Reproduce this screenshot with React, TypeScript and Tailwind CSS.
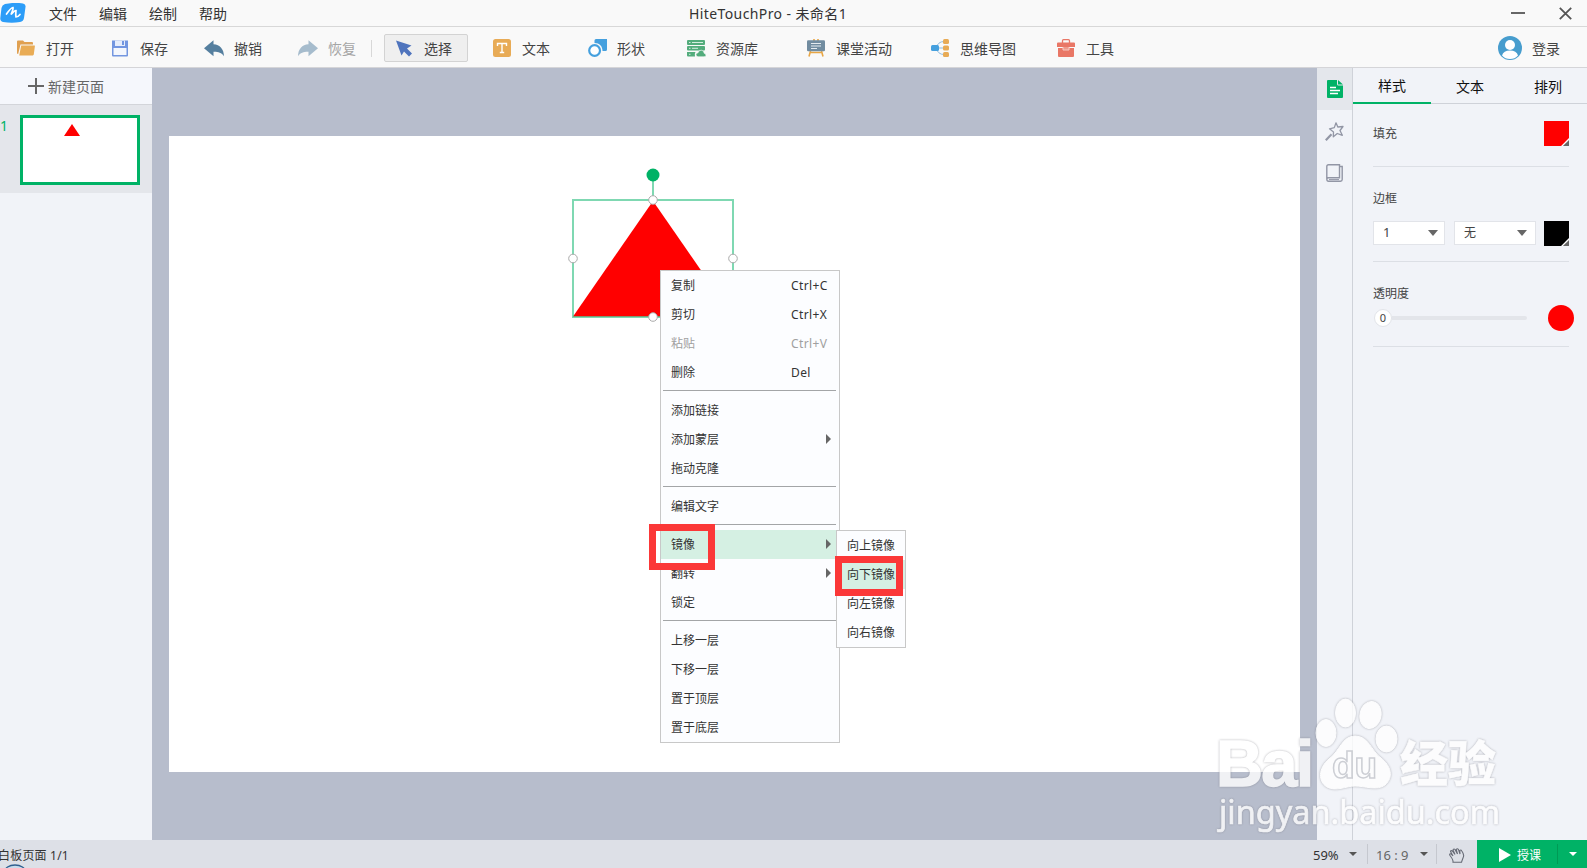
import type { ReactNode } from "react";

const OpenIcon = () => (
  <svg width="18" height="16" viewBox="0 0 18 16">
    <path d="M0 1.5Q0 .5 1 .5H6L7.5 2H15Q16 2 16 3V4.5H3.5L1.200 14H1Q0 14 0 13Z" fill="#e0a050" />
    <path d="M4.200 5.5H17.6Q18 5.5 17.9 6L16.800 14.6Q16.600 15.4 15.800 15.4H2.2Z" fill="#e9ac55" />
  </svg>
);

const SaveIcon = () => (
  <svg width="16" height="17" viewBox="0 0 16 17">
    <path d="M0 .5H16V15.5Q16 16.5 15 16.5H1Q0 16.5 0 15.5Z" fill="#7396e0" />
    <path d="M3 .5H13V6H3Z" fill="#e6edfb" />
    <path d="M10 1H12V5H10Z" fill="#7396e0" />
    <path d="M1.5 8H14.5V15H1.5Z" fill="#f4f7fd" />
  </svg>
);

const UndoIcon = () => (
  <svg width="20" height="17" viewBox="0 0 20 17">
    <path d="M0 8.2L9.5 .3V4.3C16 4.8 19.8 9 20 16.3C17.5 12.3 14 11.6 9.5 11.7V16.3Z" fill="#557f9f" />
  </svg>
);

const RedoIcon = () => (
  <svg width="20" height="17" viewBox="0 0 20 17">
    <path d="M20 8.2L10.5 .3V4.3C4 4.8 .2 9 0 16.3C2.5 12.3 6 11.6 10.5 11.7V16.3Z" fill="#a6bccd" />
  </svg>
);

const SelectIcon = () => (
  <svg width="16" height="17" viewBox="0 0 16 17">
    <path d="M0 .5L15.5 5.5L11 8.5L16 13.5L13 16.5L8 11.5L5.5 15.5Z" fill="#4f74bd" />
  </svg>
);

const TextIcon = () => (
  <svg width="18" height="18" viewBox="0 0 18 18">
    <rect width="18" height="18" rx="2.5" fill="#e8ab56" />
    <path d="M4.5 7V4.5H13.5V7M9 4.5V13.5M6.8 13.5H11.2" fill="none" stroke="#fff" strokeWidth="1.4" />
  </svg>
);

const ShapeIcon = () => (
  <svg width="19" height="18" viewBox="0 0 19 18">
    <path d="M6.5 1.5Q6.5 0 8 0H19V10.5Q19 12 17.5 12H14.5C14.5 7 11.5 4 6.5 4Z" fill="#45a0de" />
    <circle cx="6.6" cy="11.5" r="5.4" fill="#fff" stroke="#45a0de" strokeWidth="2.2" />
  </svg>
);

const LibraryIcon = () => (
  <svg width="19" height="17" viewBox="0 0 19 17">
    <g fill="#53ac7c">
      <rect width="18" height="5" rx="1" />
      <rect y="6" width="18" height="4.6" rx="1" />
      <path d="M0 12H8.5Q7.3 14 8 16.5H1Q0 16.5 0 15.5Z" />
      <path d="M11 16.8Q8.8 16.5 9 14.6Q9.2 13 11 12.8Q11.7 10 14.3 10.2Q17 10.4 17.1 13.2Q19 13.6 19 15.2Q18.8 16.8 17 16.8Z" stroke="#f9f9f9" strokeWidth=".6" />
    </g>
    <path d="M2 2.5H3.5M5 2.5H16M2 8.3H3.5M5 8.3H11M2 14.3H3.5" stroke="#d5eddf" strokeWidth="1" />
  </svg>
);

const ClassIcon = () => (
  <svg width="18" height="18" viewBox="0 0 18 18">
    <path d="M7 0V2M11 0V2M3.5 12L2 17.5M14.5 12L16 17.5M2.8 13.5H15.2" stroke="#e8a645" strokeWidth="1.6" />
    <rect y="1.2" width="18" height="11" rx="1.2" fill="#718ca0" />
    <path d="M4 4.5H14M4 7H14M4 9.5H10" stroke="#e5ebef" />
  </svg>
);

const MindIcon = () => (
  <svg width="18" height="18" viewBox="0 0 18 18">
    <path d="M5 9H13M5 9Q7 2.5 13 2.5M5 9Q7 15.5 13 15.5" fill="none" stroke="#91bde0" />
    <rect y="6" width="8" height="6" rx="1.5" fill="#45a0de" />
    <g fill="#e8ab56">
      <rect x="12" width="6" height="5" rx="1.5" />
      <rect x="12" y="6.5" width="6" height="5" rx="1.5" />
      <rect x="12" y="13" width="6" height="5" rx="1.5" />
    </g>
  </svg>
);

const ToolIcon = () => (
  <svg width="18" height="18" viewBox="0 0 18 18">
    <path d="M5.5 4V1.7Q5.5 .7 6.5 .7H11.5Q12.5 .7 12.5 1.7V4" fill="none" stroke="#e97766" strokeWidth="1.3" />
    <path d="M0 4.5Q0 3.5 1 3.5H17Q18 3.5 18 4.5V8H0ZM1 9H17V17Q17 18 16 18H2Q1 18 1 17Z" fill="#e97766" />
    <path d="M6 8V11H12V8" fill="#ee9a8c" stroke="#f8c9c1" />
  </svg>
);

const Tool = ({ icon, label, className }: { icon: ReactNode; label: string; className: string }) => (
  <div className={`flex h-7 shrink-0 items-center ${className}`}>
    {icon}
    <span className="whitespace-nowrap pt-0.5">{label}</span>
  </div>
);

const Row = ({ label, keys, arrow, disabled, active }: {
  label: string;
  keys?: string;
  arrow?: boolean;
  disabled?: boolean;
  active?: boolean;
}) => (
  <div className={`flex h-[29px] items-center pl-[10px] ${disabled ? "text-[#a0a0a0]" : ""} ${active ? "bg-[#d5f0e3]" : ""}`}>
    <span className="w-[120px] whitespace-nowrap pt-px">{label}</span>
    {keys && <span className="tracking-[0.4px]">{keys}</span>}
    {arrow && (
      <svg className="-mt-px ml-[35px]" width="5" height="10" viewBox="0 0 5 10">
        <path d="M0 0L5 5L0 10Z" fill="#666" />
      </svg>
    )}
  </div>
);

const Separator = () => (
  <div className="h-[9px] pl-[2px] pr-[3px] pt-[3px]">
    <div className="h-px bg-[#a3a5a7]" />
  </div>
);

const ContextMenu = () => (
  <div className="absolute left-[508px] top-[202px] w-[180px] border border-[#c8c8c8] bg-[#fcfdff] text-xs text-[#333]">
    <Row label="复制" keys="Ctrl+C" />
    <Row label="剪切" keys="Ctrl+X" />
    <Row label="粘贴" keys="Ctrl+V" disabled />
    <Row label="删除" keys="Del" />
    <Separator />
    <Row label="添加链接" />
    <Row label="添加蒙层" arrow />
    <Row label="拖动克隆" />
    <Separator />
    <Row label="编辑文字" />
    <Separator />
    <Row label="镜像" arrow active />
    <Row label="翻转" arrow />
    <Row label="锁定" />
    <Separator />
    <Row label="上移一层" />
    <Row label="下移一层" />
    <Row label="置于顶层" />
    <Row label="置于底层" />
  </div>
);

const SubMenu = () => (
  <div className="absolute left-[684px] top-[462px] w-[70px] overflow-hidden border border-[#c8c8c8] bg-[#fcfdff] text-xs text-[#333]">
    <Row label="向上镜像" />
    <Row label="向下镜像" active />
    <Row label="向左镜像" />
    <Row label="向右镜像" />
  </div>
);

const Selection = () => (
  <svg className="absolute left-[412px] top-[92px]" width="180" height="168" viewBox="0 0 180 168">
    <path d="M89 41L169 156.5H9Z" fill="#f00" />
    <path d="M9 40H169V157H9ZM89 40V15" fill="none" stroke="#00b266" strokeOpacity=".5" strokeWidth="2" />
    <circle cx="89" cy="15" r="6.5" fill="#00b266" />
    <g fill="#fff" stroke="#aaa">
      <circle cx="89" cy="40" r="4.3" />
      <circle cx="9" cy="98.5" r="4.3" />
      <circle cx="169" cy="98.5" r="4.3" />
      <circle cx="89" cy="157" r="4.3" />
    </g>
  </svg>
);

const Swatch = ({ className }: { className: string }) => (
  <div className={`size-[25px] ${className}`}>
    <svg width="25" height="25" viewBox="0 0 25 25">
      <path d="M25 18V25H18Z" fill="#666" />
      <path d="M25.5 17.5L17.5 25.5" stroke="#fff" strokeWidth="1.3" />
    </svg>
  </div>
);

const Caret = ({ className = "" }: { className?: string }) => (
  <svg className={className} width="10" height="6" viewBox="0 0 10 6" preserveAspectRatio="none">
    <path d="M0 0H10L5 6Z" fill="currentColor" />
  </svg>
);

const StylePanel = () => (
  <div className="flex w-[234px] flex-col bg-[#f1f3f8]">
    <div className="flex h-9 border-b border-[#cfd2d9] text-sm text-[#111]">
      <div className="flex h-9 w-[78px] items-center justify-center border-b-2 border-[#00b266] pt-0.5">样式</div>
      <div className="flex w-[78px] items-center justify-center pt-0.5">文本</div>
      <div className="flex w-[78px] items-center justify-center pt-0.5">排列</div>
    </div>
    <div className="ml-5 w-[196px] text-xs text-[#444]">
      <div className="flex h-[63px] items-center justify-between border-b border-[#dcdfe5] pt-[1px]">
        <span className="-mt-1">填充</span>
        <Swatch className="-mt-1 bg-[#f00]" />
      </div>
      <div className="h-[95px] border-b border-[#dcdfe5] pt-[23px]">
        <div className="h-[18px] leading-[18px]">边框</div>
        <div className="mt-[13px] flex h-[25px] items-center">
          <div className="-mt-px mr-[9px] flex h-6 w-[72px] items-center justify-between border border-[#e2e4e9] bg-white pl-[9px] pr-[6px] text-[13px]">
            1<Caret className="text-[#666]" />
          </div>
          <div className="-mt-px mr-2 flex h-6 w-[82px] items-center justify-between border border-[#e2e4e9] bg-white pl-[9px] pr-[8px]">
            无<Caret className="text-[#666]" />
          </div>
          <Swatch className="bg-black" />
        </div>
      </div>
      <div className="h-[85px] border-b border-[#dcdfe5] pt-[23px]">
        <div className="h-[18px] leading-[18px]">透明度</div>
        <div className="mt-[2px] flex h-[26px] w-[202px] items-center">
          <div className="z-10 ml-[1px] flex size-[18px] items-center justify-center rounded-full border border-[#e2e4e9] bg-white text-[11px]">0</div>
          <div className="h-1 w-[135px] rounded-r bg-[#e3e5ea]" />
          <div className="ml-[21px] size-[26px] rounded-full bg-[#f00]" />
        </div>
      </div>
    </div>
  </div>
);

const SideIcons = () => (
  <div className="flex w-9 flex-col border-r border-[#cfd2d9] bg-[#f1f3f8]">
    <div className="flex h-[42px] items-center justify-center bg-[#e4e7ec]">
      <svg width="16" height="18" viewBox="0 0 16 18">
        <path d="M1 0H10V4Q10 5.5 11.5 5.5H16V17Q16 18 15 18H1Q0 18 0 17V1Q0 0 1 0ZM11 0L16 4.5H11Z" fill="#00b266" />
        <path d="M3 7.5H9M3 10.5H13M3 13.5H11" stroke="#fff" strokeWidth="1.3" />
      </svg>
    </div>
    <div className="flex h-[42px] items-center justify-center">
      <svg width="19" height="19" viewBox="0 0 19 19">
        <path d="M11 .8L12.8 5L18 4.5L15 8.5L17.3 13.3L12.3 11.5L8.3 14.8L8.5 10L4.5 6.8L9.3 5.6Z" fill="none" stroke="#9296a5" strokeWidth="1.3" strokeLinejoin="round" />
        <path d="M.8 18.2L6.5 12.3" stroke="#9296a5" strokeWidth="2.200" />
      </svg>
    </div>
    <div className="flex h-[42px] items-center justify-center">
      <svg width="17" height="18" viewBox="0 0 17 18">
        <path d="M2.5 .8H13.5V13.8H2.5Q.8 13.8 .8 15.3V2.5Q.8 .8 2.5 .8ZM.8 15Q.8 17.2 2.5 17.2H14.5Q16.2 17.2 16.2 15.5V2.5H14" fill="none" stroke="#9296a5" strokeWidth="1.4" />
        <path d="M3 15.6H13" stroke="#9296a5" />
      </svg>
    </div>
  </div>
);

const Watermark = () => (
  <svg
    className="pointer-events-none absolute left-[1210px] top-[690px] opacity-80 drop-shadow-[0_0_1px_rgba(100,100,110,0.6)]"
    width="300"
    height="146"
    viewBox="0 0 300 146"
  >
    <g fill="#fff" stroke="#fff" fontFamily="'Liberation Sans', 'Noto Sans CJK SC', sans-serif" fontWeight="700">
      <text x="6" y="96" fontSize="65" textLength="98" strokeWidth="1.500">Bai</text>
      <ellipse cx="116" cy="43" rx="10" ry="13.500" />
      <ellipse cx="135.500" cy="23" rx="10" ry="14" />
      <ellipse cx="160.500" cy="25" rx="10.500" ry="13.500" transform="rotate(12 160.500 25)" />
      <ellipse cx="176.500" cy="49" rx="10.500" ry="13" />
      <path d="M145 46C132 46 130 61 119 69C108 78 108 92 117 97C126 102 136 96 145 96C155 96 167 101 175 95C184 87 181 76 171 68C161 61 159 46 145 46Z" />
      <text x="122" y="88" fontSize="37" textLength="45" stroke="#c4c6cc" strokeWidth="1.500">du</text>
      <text x="190" y="91" fontSize="48" fontWeight="900" strokeWidth=".5" fontFamily="'Noto Sans CJK SC', sans-serif">经验</text>
      <text x="9" y="134" fontSize="33" fontWeight="400" strokeWidth=".7" textLength="281" lengthAdjust="spacingAndGlyphs" fontFamily="'Noto Sans', sans-serif">
        jingyan.baidu.com
      </text>
    </g>
  </svg>
);

const App = () => {
  return (
    <div className="relative flex h-[868px] w-[1587px] flex-col overflow-hidden bg-[#f9f9f9] font-['Noto_Sans','Noto_Sans_CJK_SC',sans-serif] text-sm text-[#444]">
      {/* Title bar */}
      <div className="flex h-[27px] items-center border-b border-[#d8d8d8] text-[#333]">
        <svg className="-mt-px" width="26" height="20" viewBox="0 0 26 20">
          <path d="M5 1Q15 -1 23 .5Q26 1 25.500 4L24 15Q23.500 18.500 20 19Q12 20.500 3 19Q0 18.500 .3 15L1.500 5Q2 2 5 1Z" fill="#2c9df8" />
          <path d="M6.500 11Q11.500 4 13 4.500Q13.500 6 11 11.500Q15 7 16 7.500Q15.500 12 16 14Q18 14 20 11.500" fill="none" stroke="#fff" strokeWidth="1.700" strokeLinecap="round" />
        </svg>
        <div className="ml-[23px] flex w-[617px] gap-[22px] pt-px">
          <span>文件</span>
          <span>编辑</span>
          <span>绘制</span>
          <span>帮助</span>
        </div>
        <span className="ml-[23px] w-[822px] whitespace-nowrap pt-px tracking-[0.4px]">HiteTouchPro - 未命名1</span>
        <div className="h-0.5 w-[14px] shrink-0 bg-[#666]" />
        <svg className="ml-[34px] shrink-0" width="13" height="13" viewBox="0 0 13 13">
          <path d="M.8 .8L12.200 12.200M12.200 .8L.8 12.200" stroke="#555" strokeWidth="1.800" />
        </svg>
      </div>

      {/* Toolbar */}
      <div className="flex h-[41px] items-center border-b border-[#d5d5d8] pl-[17px] pt-[2px]">
        <Tool icon={<OpenIcon />} label="打开" className="w-[95px] gap-[11px]" />
        <Tool icon={<SaveIcon />} label="保存" className="w-[92px] gap-3" />
        <Tool icon={<UndoIcon />} label="撤销" className="w-[94px] gap-[10px]" />
        <Tool icon={<RedoIcon />} label="恢复" className="w-[73px] gap-[10px] text-[#a5a5a5]" />
        <div className="h-[17px] w-px bg-[#d8d8d8]" />
        <Tool icon={<SelectIcon />} label="选择" className="ml-3 mr-[25px] w-[84px] gap-3 rounded-xs border border-[#d3d3d3] bg-[#efefef] pl-[11px]" />
        <Tool icon={<TextIcon />} label="文本" className="w-[95px] gap-[11px]" />
        <Tool icon={<ShapeIcon />} label="形状" className="w-[99px] gap-[10px]" />
        <Tool icon={<LibraryIcon />} label="资源库" className="w-[120px] gap-[10px]" />
        <Tool icon={<ClassIcon />} label="课堂活动" className="w-[124px] gap-[11px]" />
        <Tool icon={<MindIcon />} label="思维导图" className="w-[126px] gap-[11px]" />
        <Tool icon={<ToolIcon />} label="工具" className="w-[441px] gap-[11px]" />
        <Tool
          icon={
            <svg width="24" height="24" viewBox="0 0 24 24">
              <circle cx="12" cy="12" r="12" fill="#479dce" />
              <circle cx="12" cy="9" r="5" fill="#fff" />
              <path d="M4 19.500Q5.500 14.500 12 14.500Q18.500 14.500 20 19.500Q17 23 12 23Q7 23 4 19.500Z" fill="#fff" />
            </svg>
          }
          label="登录"
          className="gap-[10px]"
        />
      </div>

      <div className="flex h-[772px]">
        {/* Page list */}
        <div className="w-[152px] bg-[#f1f3f8]">
          <div className="flex h-[37px] items-center border-b border-[#d3d5da] bg-[#f5f7fc] pl-7 text-[#666]">
            <svg className="mr-1" width="16" height="16" viewBox="0 0 16 16">
              <path d="M8 0V16M0 8H16" stroke="#666" strokeWidth="2" />
            </svg>
            <span className="pt-0.5">新建页面</span>
          </div>
          <div className="flex h-[88px] bg-[#e4e6eb] pt-[10px]">
            <span className="w-5 pt-px text-[#00b266]">1</span>
            <div className="h-[70px] w-[120px] border-[3px] border-[#00b266] bg-white">
              <svg className="ml-[41px] mt-[6px]" width="16" height="12" viewBox="0 0 16 12">
                <path d="M8 0L16 12H0Z" fill="#f00" />
              </svg>
            </div>
          </div>
        </div>

        {/* Whiteboard */}
        <div className="relative w-[1165px] bg-[#b7bdcc] pl-[17px] pt-[68px]">
          <div className="h-[636px] w-[1131px] bg-white" />
          <Selection />
          <ContextMenu />
          <SubMenu />
          <div className="absolute left-[497px] top-[456px] h-[46px] w-[66px] border-[7px] border-[#fb3838]" />
          <div className="absolute left-[683px] top-[488px] h-[40px] w-[68px] border-[7px] border-[#fb3838]" />
        </div>

        <SideIcons />
        <StylePanel />
      </div>

      {/* Status bar */}
      <div className="flex h-7 items-center bg-[#dde0e7] text-xs text-[#333]">
        <div className="relative flex h-7 w-[1313px] items-center">
          <span className="-ml-0.5 pt-[3px] tracking-[0.2px]">白板页面 1/1</span>
          <svg className="absolute left-[5px] top-[24px]" width="20" height="4" viewBox="0 0 20 4">
            <ellipse cx="10" cy="8" rx="10.500" ry="7" fill="#c8dcec" stroke="#2f5f8f" strokeWidth="1.300" />
          </svg>
        </div>
        <span className="w-9 pt-[3px] text-[13px]">59%</span>
        <Caret className="h-1 w-2 text-[#555]" />
        <div className="ml-[10px] h-5 w-px bg-[#c5c8cf]" />
        <span className="ml-2 w-9 whitespace-nowrap pt-[3px] text-[13px] text-[#666]">16 : 9</span>
        <Caret className="ml-2 h-1 w-2 text-[#555]" />
        <div className="ml-[8px] h-5 w-px bg-[#c5c8cf]" />
        <svg className="ml-3 mt-0.5" width="16" height="15" viewBox="0 0 16 15">
          <path d="M4 14.300Q4.500 12 1 7.500Q0 5.500 2 5.800L4 8L1.500 3.500Q1.800 2 3.300 3L6 6.500L4 2Q4.800 .2 6 1.500L8.500 6L7.200 1.500Q8.300 0 9.500 1.500L11 6L10.800 2.500Q12 1.200 12.800 3Q15.800 7 14 10Q13 12.500 12.500 14.300Z" fill="none" stroke="#666a75" strokeWidth="1.100" />
        </svg>
        <div className="ml-auto flex h-7 w-[110px] items-center bg-[#00b266] text-white">
          <svg className="ml-[22px] mt-0.5" width="12" height="14" viewBox="0 0 12 14">
            <path d="M0 0L12 7L0 14Z" fill="#fff" />
          </svg>
          <span className="ml-1.5 w-[40px] pt-1">授课</span>
          <div className="h-5 w-px bg-[#009a55]" />
          <Caret className="ml-[11px] h-1 w-2" />
        </div>
      </div>

      <Watermark />
    </div>
  );
};

export default App;
